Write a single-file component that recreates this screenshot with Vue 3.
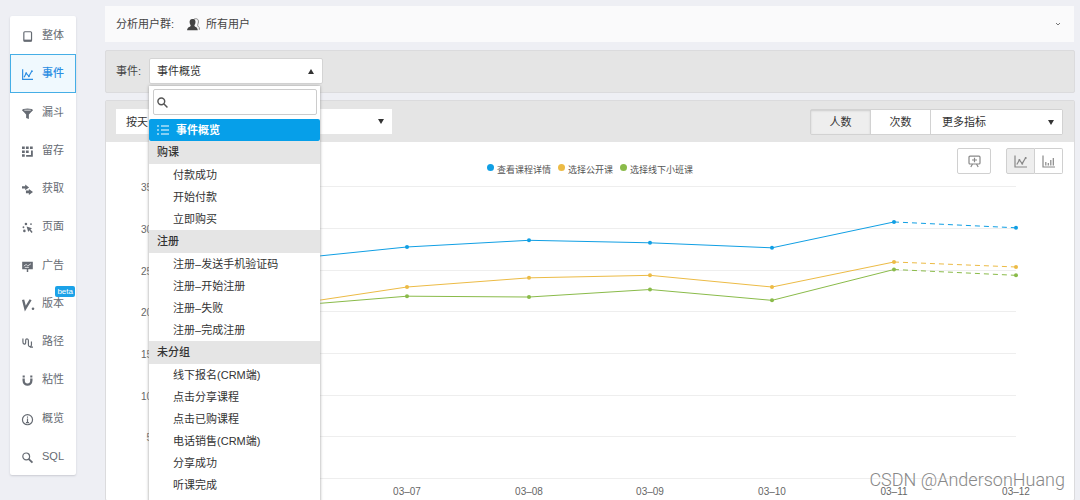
<script setup>
import { ref } from 'vue'

const nav = [
  { label: '整体', icon: 'tablet' },
  { label: '事件', icon: 'line', active: true },
  { label: '漏斗', icon: 'funnel' },
  { label: '留存', icon: 'grid' },
  { label: '获取', icon: 'arrows' },
  { label: '页面', icon: 'click' },
  { label: '广告', icon: 'board' },
  { label: '版本', icon: 'version', badge: 'beta' },
  { label: '路径', icon: 'path' },
  { label: '粘性', icon: 'magnet' },
  { label: '概览', icon: 'info' },
  { label: 'SQL', icon: 'search' },
]

const groups = [
  { name: '购课', items: ['付款成功', '开始付款', '立即购买'] },
  { name: '注册', items: ['注册–发送手机验证码', '注册–开始注册', '注册–失败', '注册–完成注册'] },
  { name: '未分组', items: ['线下报名(CRM端)', '点击分享课程', '点击已购课程', '电话销售(CRM端)', '分享成功', '听课完成'] },
]

const keyword = ref('')

const days = ['03–05', '03–06', '03–07', '03–08', '03–09', '03–10', '03–11', '03–12']
const ticks = [35, 30, 25, 20, 15, 10, 5, 0]
const series = [
  { name: '查看课程详情', color: '#109fe4', values: [25.4, 26.2, 27.7, 28.5, 28.2, 27.6, 30.7, 30] },
  { name: '选择公开课', color: '#ecbb45', values: [19.5, 20.7, 22.9, 24, 24.3, 22.9, 25.9, 25.3] },
  { name: '选择线下小班课', color: '#8abb4a', values: [19.8, 20.6, 21.8, 21.7, 22.6, 21.3, 25, 24.3] },
]
const px = (i) => Math.round(57 + i * 121.85)
const py = (v) => 304 - v * 8.34
const line = (values, from, to) =>
  values.slice(from, to).map((v, i) => `${px(i + from)},${py(v)}`).join(' ')
</script>

<template>
  <div class="page">
    <nav class="side">
      <a v-for="n in nav" :key="n.label" href="#" class="side-item" :class="{ active: n.active }">
        <svg class="side-icon" viewBox="0 0 12 12" aria-hidden="true">
          <g v-if="n.icon === 'tablet'"><rect x="2" y=".8" width="8.4" height="10.4" rx="1" class="s" /><path d="M2 10.4H10.4" class="s2" /></g>
          <g v-else-if="n.icon === 'line'"><path d="M.7 .3V11.3H12M2.3 9L4.6 4.6L7.5 8L10.8 2.2" class="s" /><circle cx="4.6" cy="4.6" r="1" /><circle cx="7.5" cy="8" r="1" /><circle cx="10.8" cy="2.4" r="1" /></g>
          <g v-else-if="n.icon === 'funnel'"><path d="M.2 2.5L4.5 7V10.8L7.5 12V7L11.8 2.5Z" /><ellipse cx="6" cy="2.3" rx="5.8" ry="1.8" /><path d="M2.5 2.4H9.5" class="light" /></g>
          <g v-else-if="n.icon === 'grid'"><path d="M0 .5h3v2.8H0zM4.3 .5h3v2.8h-3zM8.7 .5h3v2.8h-3zM0 4.8h3v2.7H0zM4.3 4.8h3v2.7h-3zM0 9h3v2.8H0z" /><path d="M4.5 10.8H10.8V4.8" class="s2" /></g>
          <g v-else-if="n.icon === 'arrows'"><path d="M0 2.4H3.5V.5L7.7 3.8L3.5 6.9V5H0zM4.3 7.2H7.5V5.4L12 8.6L7.5 12V10.2H4.3z" /></g>
          <g v-else-if="n.icon === 'click'"><circle cx="4.3" cy="2.2" r="1.4" /><circle cx="9.8" cy="2.3" r="1" /><circle cx="1.6" cy="5.7" r="1" /><circle cx="2.6" cy="9.7" r="1.4" /><path d="M5 4.8L11 6.8L9.2 7.8L11.6 10.8L10.4 12L8 9L6.8 10.9z" /></g>
          <g v-else-if="n.icon === 'board'"><path d="M.2 .8H11.8V9H.2zM5.2 8.5H6.8V12H5.2z" /><path d="M2 5.5L4.5 3.8L6.3 5.3L9.8 3M3 7H7.5" class="light" /></g>
          <g v-else-if="n.icon === 'version'"><path d="M1.2 .8L3.6 10.4L9.4 .8" class="s3" /><circle cx="12" cy="10.6" r="1.4" /></g>
          <g v-else-if="n.icon === 'path'"><path d="M1 1.5V5.5C1 8.4 4 8.4 4 6V3.7C4 1.5 7 1.5 7 4V8.4C7 11.2 10.3 10.7 10.3 8.6V5M8.5 11H12" class="s" /></g>
          <g v-else-if="n.icon === 'magnet'"><path d="M1.8 3.8V6C1.8 12 10.2 12 10.2 6V3.8" class="s3" /><path d="M.7 .6H3V2.8H.7zM9 .6H11.3V2.8H9z" /></g>
          <g v-else-if="n.icon === 'info'"><circle cx="6" cy="6.2" r="5.5" class="s" /><path d="M6 5V9.6M4.3 9.4H7.7M5.4 3.4H6.6" class="s" /></g>
          <g v-else><circle cx="4.6" cy="4.8" r="3.7" class="s" /><path d="M7.2 7.4L11.4 11.6" class="s2" /></g>
        </svg>
        <span>{{ n.label }}</span>
        <span v-if="n.badge" class="badge">{{ n.badge }}</span>
      </a>
    </nav>

    <main class="main">
      <section class="audience">
        <span>分析用户群:</span>
        <svg class="user-icon" viewBox="0 0 13 13" aria-hidden="true">
          <path d="M7 1.2C10.5-.3 12 2 11.2 5C10.8 7 9.8 7.7 12.3 9.5V11.8" fill="none" stroke="#888" />
          <path d="M5.5 1C8.2 1 8.8 2.8 8.4 5C8 6.5 7.3 7.2 7.4 8C8.2 9 10.6 9.2 10.8 12.2H.1C.2 9.2 3 9 3.7 8C3.8 7.2 3 6.5 2.7 5C2.3 2.8 3 1 5.5 1Z" fill="#444" />
        </svg>
        <span>所有用户</span>
        <svg class="chev" viewBox="0 0 6 5" aria-hidden="true"><path d="M1 1L3 3L5 1" fill="none" stroke="#777" /></svg>
      </section>

      <section class="event-bar">
        <span id="event-label">事件:</span>
        <div class="picker">
          <button class="picker-btn" type="button" aria-labelledby="event-label" aria-expanded="true">
            <span>事件概览</span>
            <svg class="tri" viewBox="0 0 6 5" aria-hidden="true"><path d="M0 5L3 0L6 5Z" /></svg>
          </button>
          <div class="menu">
            <label class="search">
              <svg viewBox="0 0 12 12" aria-hidden="true"><circle cx="4.7" cy="4.7" r="3.7" /><path d="M7.4 7.4L11.4 11.4" /></svg>
              <input v-model="keyword" type="text" aria-label="搜索事件" />
            </label>
            <button type="button" class="chosen">
              <svg viewBox="0 0 12 10" aria-hidden="true"><path d="M0 1H2M0 5H2M0 9H2M4 1H12M4 5H12M4 9H12" /></svg>
              <span>事件概览</span>
            </button>
            <div v-for="g in groups" :key="g.name">
              <div class="group">{{ g.name }}</div>
              <button v-for="i in g.items" :key="i" type="button" class="option">{{ i }}</button>
            </div>
          </div>
        </div>
      </section>

      <section class="report">
        <header class="report-head">
          <div class="select period">
            <select aria-label="时间粒度"><option>按天</option></select>
            <svg class="tri" viewBox="0 0 6 5" aria-hidden="true"><path d="M0 0H6L3 5Z" /></svg>
          </div>
          <div class="metrics">
            <button type="button" class="metric on">人数</button>
            <button type="button" class="metric">次数</button>
            <div class="select more">
              <select aria-label="更多指标"><option>更多指标</option></select>
              <svg class="tri" viewBox="0 0 6 5" aria-hidden="true"><path d="M0 0H6L3 5Z" /></svg>
            </div>
          </div>
        </header>

        <div class="chart-head">
          <ul class="legend">
            <li v-for="s in series" :key="s.name">
              <svg viewBox="0 0 6 6" aria-hidden="true"><circle cx="3" cy="3" r="3" :fill="s.color" /></svg>
              <span>{{ s.name }}</span>
            </li>
          </ul>
          <div class="tools">
            <button type="button" class="tool solo" aria-label="添加到看板">
              <svg viewBox="0 0 13 13"><rect x="1" y="1.2" width="11" height="7.8" rx="1" /><path d="M4 5H9M6.5 2.8V7.2M4.5 9L2.8 12M8.5 9L10.2 12" /></svg>
            </button>
            <button type="button" class="tool left" aria-label="折线图">
              <svg viewBox="0 0 13 13"><path d="M1 .5V12H13M2.8 9.5L5.4 5L8.2 8.6L11.5 3" /><path d="M4.6 5h1.6M7.5 8.5h1.6M10.9 3h1.6" class="dots" /></svg>
            </button>
            <button type="button" class="tool right" aria-label="柱状图">
              <svg viewBox="0 0 13 13"><path d="M1 .5V12H13M3.8 7V10.5M6.3 8V10.5M8.8 5V10.5M11.3 3V10.5" /></svg>
            </button>
          </div>
        </div>

        <svg class="chart" viewBox="0 0 968 326" role="img" aria-label="事件趋势">
          <g v-for="t in ticks" :key="t">
            <line x1="57" x2="910" :y1="Math.round(py(t))" :y2="Math.round(py(t))" class="gridline" />
            <text v-if="t > 0" x="46" :y="Math.round(py(t)) + 5" class="axis end">{{ t }}</text>
          </g>
          <text v-for="(d, i) in days" :key="d" :x="px(i)" y="321" class="axis mid">{{ d }}</text>
          <g v-for="s in series" :key="s.name" :stroke="s.color" :fill="s.color">
            <polyline :points="line(s.values, 0, 7)" class="trend" />
            <polyline :points="line(s.values, 6, 8)" class="trend dashed" />
            <circle v-for="(v, i) in s.values" :key="i" :cx="px(i)" :cy="py(v)" r="2" stroke="none" />
          </g>
        </svg>
      </section>
    </main>
    <div class="watermark">CSDN @AndersonHuang</div>
  </div>
</template>

<style>
body {
  margin: 0;
}
</style>

<style scoped>
.page {
  position: relative;
  display: flex;
  align-items: flex-start;
  gap: 29px;
  box-sizing: border-box;
  height: 100vh;
  padding: 6px 5px 0 10px;
  overflow: hidden;
  background: #eeeff4;
  color: #444;
  font: 11px/16px "Liberation Sans", "Noto Sans CJK SC", sans-serif;
}
button,
select,
input {
  box-sizing: border-box;
  margin: 0;
  border: 0;
  border-radius: 0;
  padding: 0;
  background: none;
  color: inherit;
  font: inherit;
}
.side {
  display: grid;
  grid-template-rows: repeat(12, 1fr);
  flex: none;
  width: 66px;
  height: 459px;
  margin-top: 10px;
  border-radius: 2px;
  background: #fff;
  box-shadow: 0 1px 2px #c9cbd2;
}
.side-item {
  position: relative;
  display: flex;
  align-items: center;
  gap: 9px;
  padding-left: 11px;
  border: 1px solid transparent;
  color: #666b73;
  text-decoration: none;
}
.side-item.active {
  border-color: #45aee6;
  background: #f0f9fe;
  color: #2d8ee2;
  font-weight: 500;
}
.side-icon {
  width: 11px;
  height: 11px;
  margin-top: 3px;
  overflow: visible;
  fill: currentColor;
}
.s,
.s2,
.s3 {
  fill: none;
  stroke: currentColor;
  stroke-width: 1.3;
}
.s2 {
  stroke-width: 2;
}
.s3 {
  stroke-width: 2.5;
}
.light {
  fill: none;
  stroke: #fff;
  stroke-width: 0.8;
}
.badge {
  position: absolute;
  top: 1px;
  right: 0;
  padding: 0 2px;
  border-radius: 2px;
  background: #1ba2e8;
  color: #fff;
  font-size: 8px;
  line-height: 11px;
}
.main {
  display: flex;
  flex: 1;
  flex-direction: column;
  min-width: 0;
}
.audience {
  display: flex;
  align-items: center;
  height: 36px;
  margin: 0 1px 8px 0;
  padding: 0 13px 0 11px;
  background: #fafafb;
}
.user-icon {
  width: 13px;
  height: 13px;
  margin: 0 6px 0 13px;
}
.chev {
  width: 6px;
  height: 5px;
  margin-left: auto;
}
.event-bar {
  display: flex;
  align-items: center;
  gap: 8px;
  box-sizing: border-box;
  height: 43px;
  margin-bottom: 7px;
  padding: 0 10px 1px;
  border: 1px solid #dbdbdd;
  border-radius: 2px;
  background: #e5e5e5;
}
.picker {
  position: relative;
  width: 174px;
}
.picker-btn {
  display: flex;
  align-items: center;
  justify-content: space-between;
  width: 100%;
  height: 26px;
  padding: 0 8px 0 7px;
  border: 1px solid #d4d4d4;
  border-radius: 2px;
  background: #fff;
  color: #333;
}
.tri {
  width: 6px;
  height: 5px;
  fill: #333;
}
.menu {
  position: absolute;
  z-index: 2;
  top: 28px;
  left: 0;
  box-sizing: border-box;
  width: 171px;
  padding: 3px 0 20px;
  background: #fff;
  box-shadow: 0 0 3px #999;
  color: #333;
}
.search {
  display: flex;
  align-items: center;
  box-sizing: border-box;
  height: 26px;
  margin: 0 3px 4px 4px;
  padding-left: 3px;
  border: 1px solid #ccc;
  border-radius: 2px;
}
.search svg {
  flex: none;
  width: 11px;
  height: 11px;
  fill: none;
  stroke: #555;
  stroke-width: 1.6;
}
.search input {
  flex: 1;
  min-width: 0;
  height: 22px;
  padding-left: 4px;
  outline: 0;
}
.chosen {
  display: flex;
  align-items: center;
  gap: 7px;
  width: 100%;
  height: 22px;
  padding-left: 8px;
  border-radius: 2px;
  background: #069fe9;
  color: #fff;
  font-weight: 700;
}
.chosen svg {
  width: 12px;
  height: 10px;
  stroke: #fff;
  stroke-width: 1.2;
}
.group {
  height: 23px;
  padding-left: 8px;
  background: #e5e5e5;
  font-weight: 500;
  line-height: 23px;
}
.option {
  display: block;
  width: 100%;
  height: 22px;
  padding-left: 24px;
  text-align: left;
  white-space: nowrap;
}
.report {
  border: 1px solid #dbdbdd;
  border-radius: 2px;
  background: #fff;
}
.report-head {
  display: flex;
  align-items: center;
  justify-content: space-between;
  height: 41px;
  padding: 0 11px 0 10px;
  background: #e5e5e5;
  color: #333;
}
.select {
  position: relative;
  box-sizing: border-box;
  height: 25px;
  background: #fff;
}
.select select {
  width: 100%;
  height: 100%;
  padding-left: 11px;
  appearance: none;
}
.select .tri {
  position: absolute;
  top: 10px;
  right: 8px;
  pointer-events: none;
}
.period {
  width: 276px;
}
.period select {
  padding-left: 10px;
}
.metrics {
  display: flex;
  border: 1px solid #d2d2d2;
  border-radius: 2px;
}
.metrics .select,
.metric {
  height: 24px;
}
.metric {
  width: 60px;
  border-right: 1px solid #d2d2d2;
  background: #fff;
}
.metric.on {
  background: #eee;
  box-shadow: inset 0 1px 2px #ccc;
}
.more {
  width: 131px;
}
.chart-head {
  display: grid;
  grid-template-columns: 1fr auto 1fr;
  align-items: center;
  height: 26px;
  padding: 6px 11px 0;
}
.legend {
  display: flex;
  grid-column: 2;
  gap: 7px;
  margin: 16px 0 0;
  padding: 0;
  color: #555;
  font-size: 9px;
  line-height: 12px;
  list-style: none;
}
.legend li {
  display: flex;
  gap: 3px;
}
.legend svg {
  width: 7px;
  height: 7px;
}
.tools {
  display: flex;
  align-self: start;
  justify-self: end;
}
.tool {
  display: grid;
  place-items: center;
  width: 29px;
  height: 26px;
  border: 1px solid #d0d0d0;
  background: #fff;
}
.tool svg {
  width: 13px;
  height: 13px;
  fill: none;
  stroke: #888;
  stroke-width: 1.2;
}
.tool .dots {
  stroke-width: 1.8;
}
.solo {
  width: 34px;
  margin-right: 15px;
  border-radius: 2px;
}
.left {
  border-radius: 2px 0 0 2px;
  background: #eee;
}
.right {
  width: 28px;
  border-left: 0;
  border-radius: 0 2px 2px 0;
}
.chart {
  display: block;
  width: 100%;
}
.gridline {
  stroke: #eee;
  shape-rendering: crispEdges;
}
.axis {
  fill: #666;
  font-size: 10px;
}
.end {
  text-anchor: end;
}
.mid {
  text-anchor: middle;
}
.trend {
  fill: none;
  stroke-width: 1;
}
.dashed {
  stroke-dasharray: 5 4;
}
.watermark {
  position: absolute;
  right: 15px;
  bottom: 8px;
  color: #888;
  font: 300 18px/24px Roboto, "Liberation Sans", sans-serif;
  text-shadow: 0 0 1px #fff;
}
</style>
